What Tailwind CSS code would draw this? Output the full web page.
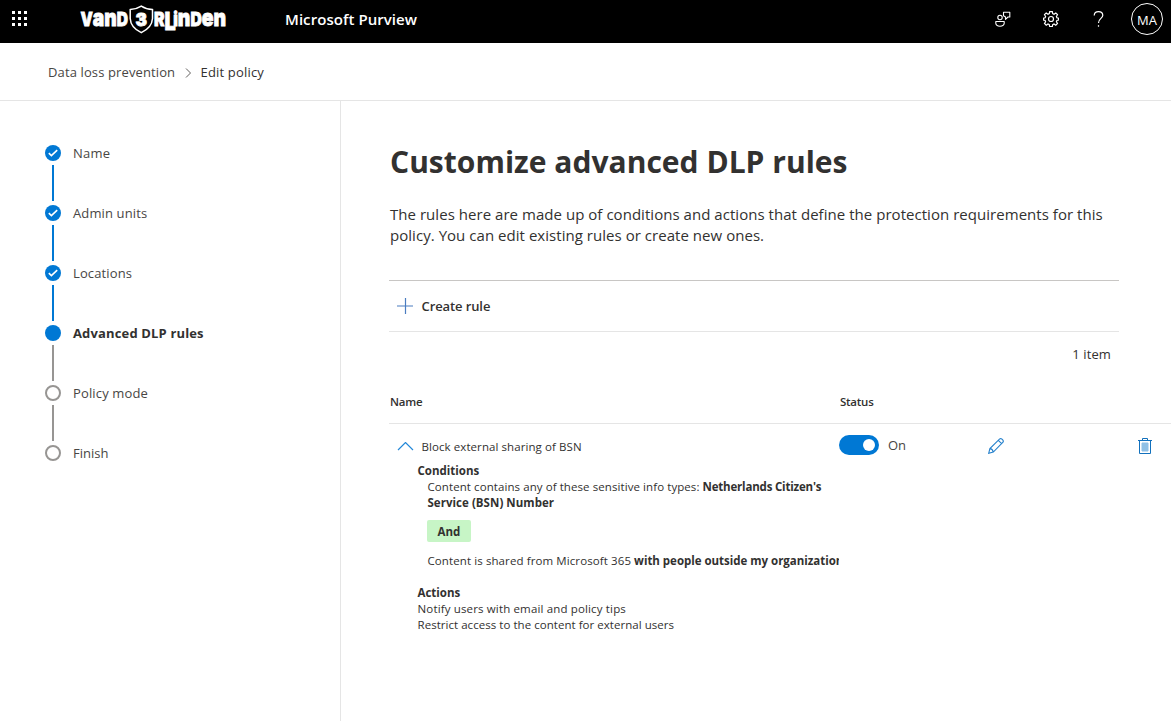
<!DOCTYPE html>
<html lang="en">
<head>
<meta charset="utf-8">
<title>Microsoft Purview</title>
<script src="https://cdn.jsdelivr.net/npm/@tailwindcss/browser@4"></script>
</head>
<body class="h-[721px] w-[1171px] overflow-hidden bg-white font-['Open_Sans','Noto_Sans',sans-serif] text-[#323130]">
<div class="flex h-full flex-col whitespace-nowrap">
  <header class="flex h-[43px] shrink-0 items-center bg-black pr-2 pb-[5px] text-white">
    <svg class="ml-3 h-4 w-4 shrink-0" viewBox="0 0 16 16" fill="#fff"><path d="M0 0h3v3H0zM6 0h3v3H6zM12 0h3v3h-3zM0 6h3v3H0zM6 6h3v3H6zM12 6h3v3h-3zM0 12h3v3H0zM6 12h3v3H6zM12 12h3v3h-3z"/></svg>
    <svg class="ml-[51px] h-8 w-[149px] shrink-0" viewBox="79 3 149 32" fill="#fff" stroke="#fff" stroke-width=".8" font-family="Inter" font-weight="900">
      <text x="80.500" y="25.500" font-size="19" textLength="47.500" lengthAdjust="spacingAndGlyphs">V<tspan font-size="23.500">an</tspan>D</text>
      <path d="M141.300 6.200Q136.500 9.300 130.200 9.600V18.500Q130.600 27.500 141.300 32.700Q152 27.500 152.500 18.500V9.600Q146 9.300 141.300 6.200Z" fill="none" stroke-width="1.500"/>
      <text x="135.500" y="25.500" font-size="18" textLength="11.500" lengthAdjust="spacingAndGlyphs">3</text>
      <text x="154" y="25.500" font-size="19" textLength="72" lengthAdjust="spacingAndGlyphs">R<tspan dy="4.500" font-size="24">L</tspan><tspan dx="-3" dy="-4.500" font-size="19">i</tspan><tspan font-size="23.500">n</tspan>D<tspan font-size="23.500">en</tspan></text>
    </svg>
    <span class="ml-[57px] text-[15px] font-semibold tracking-[0.06px]">Microsoft Purview</span>
    <div class="ml-auto flex items-center">
      <svg class="h-4 w-4" viewBox="0 0 16 16" fill="none" stroke="#fff" stroke-width="1.100"><circle cx="5" cy="6.500" r="2.200"/><path d="M.8 10.500h8.400v1.800Q9 15.200 5 15.200T.8 12.300ZM8.500 1.200h6.300v4.800H13L10.500 8.300V6L8.500 4.800Z" stroke-linejoin="round"/></svg>
      <svg class="ml-8 h-4 w-4" viewBox="0 0 16 16" fill="none" stroke="#fff" stroke-width="1.200"><circle cx="8" cy="8" r="2.500"/><path d="M6.700.6h2.600l.4 2 1.300.6 1.800-1.200 1.700 1.700-1.100 1.800.5 1.300 1.600.4v1.800l-1.600.4-.5 1.300 1.100 1.800-1.700 1.700-1.800-1.200-1.300.6-.4 2H6.700l-.4-2-1.300-.6-1.800 1.200-1.700-1.700 1.100-1.800-.5-1.300-1.600-.4V7.200l1.600-.4.5-1.300-1.100-1.800 1.700-1.700L5 3.200l1.300-.6Z"/></svg>
      <svg class="ml-[34px] h-4 w-[11px]" viewBox="0 0 11 16" fill="none" stroke="#fff" stroke-width="1.200"><path d="M1.200 4.500Q1.400.7 5.500.7T9.800 4.300C9.800 7.500 5.500 7.500 5.500 12"/><path d="M5.500 14.200v1.500"/></svg>
      <div class="ml-[27px] flex h-8 w-8 items-center justify-center rounded-full border border-white pt-[3px] text-[13px] font-medium">MA</div>
    </div>
  </header>
  <nav class="flex h-[58px] shrink-0 items-center border-b border-[#e5e5e5] pt-0.5 pl-12 text-[13px] tracking-[0.12px]">
    <span class="w-[127px] text-[#484644]">Data loss prevention</span>
    <svg class="mr-[9px] ml-[9.500px] h-[10px] w-[7px]" viewBox="0 0 7 10" fill="none" stroke="#605e5c"><path d="M1 .5 5.500 5 1 9.500"/></svg>
    <span class="tracking-[0.180px]">Edit policy</span>
  </nav>
  <div class="flex min-h-0 flex-1">
    <aside class="w-[341px] shrink-0 border-r border-[#e5e5e5] pt-11 pl-[45px] text-[13px] text-[#484644]">
      <ol>
        <li class="flex h-[60px] gap-3"><div class="flex flex-col items-center gap-1"><svg class="h-4 w-4" viewBox="0 0 16 16"><circle cx="8" cy="8" r="8" fill="#0078d4"/><path d="m3.800 8.200 2.600 2.500 5.800-5.600" fill="none" stroke="#fff" stroke-width="1.600"/></svg><i class="h-9 w-0.5 bg-[#0078d4]"></i></div><span class="leading-4 tracking-[0.2px]">Name</span></li>
        <li class="flex h-[60px] gap-3"><div class="flex flex-col items-center gap-1"><svg class="h-4 w-4" viewBox="0 0 16 16"><circle cx="8" cy="8" r="8" fill="#0078d4"/><path d="m3.800 8.200 2.600 2.500 5.800-5.600" fill="none" stroke="#fff" stroke-width="1.600"/></svg><i class="h-9 w-0.5 bg-[#0078d4]"></i></div><span class="leading-4 tracking-[0.12px]">Admin units</span></li>
        <li class="flex h-[60px] gap-3"><div class="flex flex-col items-center gap-1"><svg class="h-4 w-4" viewBox="0 0 16 16"><circle cx="8" cy="8" r="8" fill="#0078d4"/><path d="m3.800 8.200 2.600 2.500 5.800-5.600" fill="none" stroke="#fff" stroke-width="1.600"/></svg><i class="h-9 w-0.5 bg-[#0078d4]"></i></div><span class="leading-4 tracking-[0.12px]">Locations</span></li>
        <li class="flex h-[60px] gap-3"><div class="flex flex-col items-center gap-1"><i class="h-4 w-4 rounded-full bg-[#0078d4]"></i><i class="h-9 w-0.5 bg-[#979593]"></i></div><span class="leading-4 font-bold tracking-[0.150px] text-[#323130]">Advanced DLP rules</span></li>
        <li class="flex h-[60px] gap-3"><div class="flex flex-col items-center gap-1"><i class="h-4 w-4 rounded-full border-2 border-[#979593]"></i><i class="h-9 w-0.5 bg-[#979593]"></i></div><span class="leading-4 tracking-[0.14px]">Policy mode</span></li>
        <li class="flex h-[60px] gap-3"><i class="h-4 w-4 rounded-full border-2 border-[#979593]"></i><span class="leading-4">Finish</span></li>
      </ol>
    </aside>
    <main class="min-w-0 flex-1 pt-[41px] pl-12">
      <h1 class="pl-px text-[30px] leading-10 font-bold tracking-[0.02px]">Customize advanced DLP rules</h1>
      <p class="mt-[22px] pl-px text-[15px] leading-[21px] tracking-[0.04px]">The rules here are made up of conditions and actions that define the protection requirements for this<br>policy. You can edit existing rules or create new ones.</p>
      <div class="mt-[34px] flex h-[52px] w-[730px] items-center border-t border-b border-t-[#c8c6c4] border-b-[#e5e5e5] text-[13px] font-semibold">
        <svg class="ml-2 h-4 w-4" viewBox="0 0 16 16" stroke="#4a7cc0" stroke-width="1.200"><path d="M8.500 0v16M0 8h16"/></svg>
        <span class="ml-[8.500px] pt-px tracking-[-0.100px]">Create rule</span>
      </div>
      <div class="flex h-[45px] w-[722px] items-center justify-end text-[13px] tracking-[0.1px]">1 item</div>
      <div class="flex h-[47px] items-center border-b border-[#e5e5e5] pt-1 text-[11.500px] font-semibold tracking-[-0.250px]"><span class="w-[450px] pl-px">Name</span><span class="pl-px">Status</span></div>
      <div class="flex">
        <section class="w-[450px] shrink-0 overflow-hidden pt-[15px] text-[11.500px] leading-4">
          <div class="flex items-center">
            <svg class="mr-[7.500px] ml-2 h-[10px] w-[17px]" viewBox="0 0 17 10" fill="none" stroke="#2488d8" stroke-width="1.200"><path d="m1 8 7.500-7.500L16 8"/></svg>
            <span class="tracking-[0.080px]">Block external sharing of BSN</span>
          </div>
          <div class="mt-2 pl-[28.500px]">
            <div class="font-bold">Conditions</div>
            <div class="pl-[10px]">
              <p><span class="tracking-[0.08px]">Content contains any of these sensitive info types:</span> <b class="tracking-[-0.190px]">Netherlands Citizen's</b><br><b class="tracking-[0.04px]">Service (BSN) Number</b></p>
              <div class="-ml-[.5px] mt-[9px] flex h-[22px] w-11 items-center justify-center rounded-[2px] bg-[#c7f5c6] pt-0.5 font-bold">And</div>
              <p class="mt-[11px]"><span class="tracking-[0.1px]">Content is shared from Microsoft 365</span> <b class="tracking-[-0.020px]">with people outside my organization</b></p>
            </div>
            <div class="mt-4 font-bold">Actions</div>
            <p class="tracking-[0.150px]">Notify users with email and policy tips</p>
            <p class="tracking-[0.040px]">Restrict access to the content for external users</p>
          </div>
        </section>
        <div class="flex h-[42px] flex-1 items-center text-[13px]">
          <div class="flex h-5 w-10 items-center justify-end rounded-full bg-[#0078d4] pr-1"><i class="h-3 w-3 rounded-full bg-white"></i></div>
          <span class="ml-[9px] w-[100px] pt-px text-[#484644]">On</span>
          <svg class="mt-0.5 h-4 w-4" viewBox="0 0 16 16" fill="none" stroke="#2480cc" stroke-width="1.100"><path d="m.7 15.300 1.200-4.700L11.700.9Q12.800.2 14 1.200l.9.9Q15.700 3.200 15 4.200L5.300 14.100ZM1.900 10.600Q4.500 10.800 5.300 14.100M10.300 2.400l3.300 3.300"/></svg>
          <svg class="mt-0.5 mr-[19px] ml-auto h-4 w-[14px]" viewBox="0 0 14 16" fill="none" stroke="#1271bd"><path d="M0 2.500h14M4.500 2.500v-2h5v2M1.500 2.500v13h11v-13"/><path d="M4 5h6v8H4z" fill="#8fc0e6" stroke="#8fc0e6"/></svg>
        </div>
      </div>
    </main>
  </div>
</div>
</body>
</html>
